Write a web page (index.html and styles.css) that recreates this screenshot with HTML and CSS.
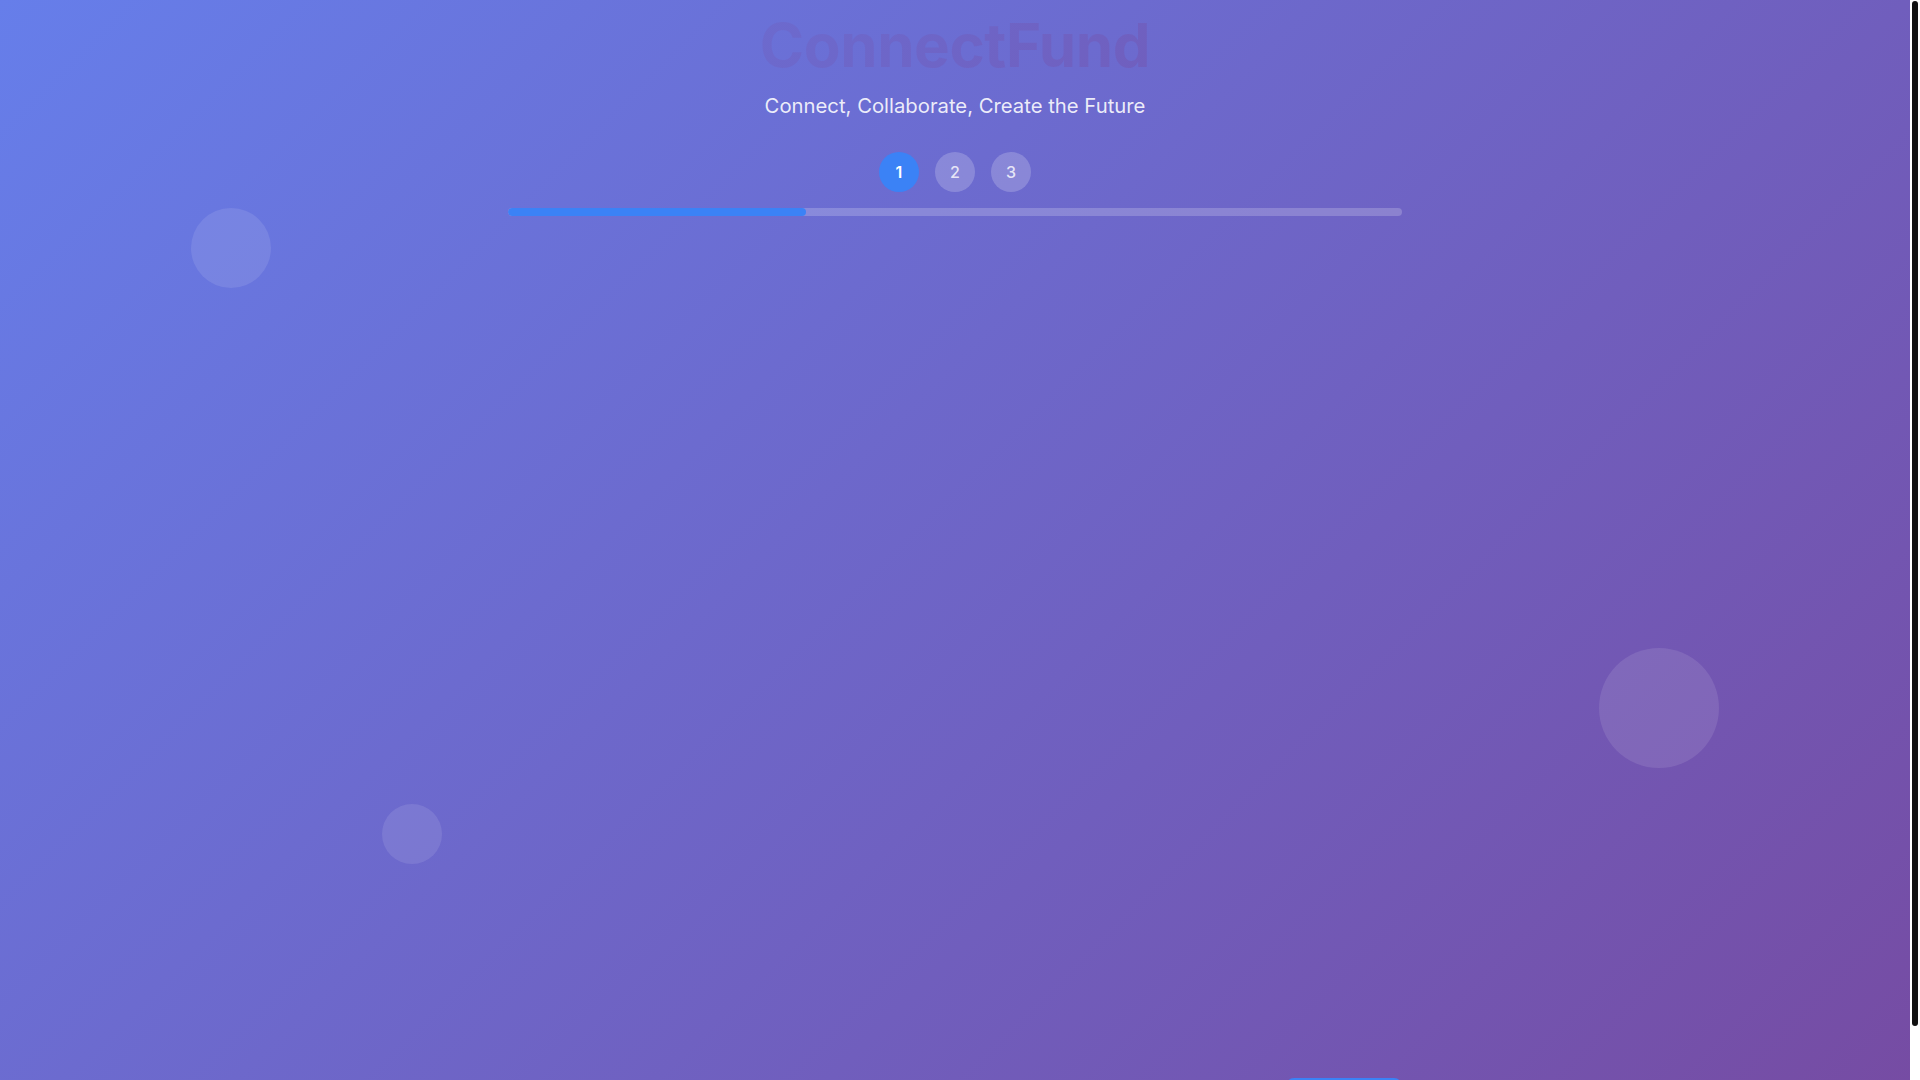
FILE: index.html
```html
<!DOCTYPE html>
<html lang="en">
<head>
<meta charset="UTF-8">
<title>ConnectFund</title>
<link rel="stylesheet" href="styles.css">
</head>
<body>
<div class="page">
  <div class="shapes">
    <div class="shape shape-a"></div>
    <div class="shape shape-b"></div>
    <div class="shape shape-c"></div>
  </div>
  <header class="header">
    <h1 class="logo">ConnectFund</h1>
    <p class="tagline">Connect, Collaborate, Create the Future</p>
  </header>
  <div class="container">
    <div class="steps">
      <div class="step active">1</div>
      <div class="step">2</div>
      <div class="step">3</div>
    </div>
    <div class="progress"><div class="progress-fill" style="width:33.333%"></div></div>
    <main class="step-content"></main>
    <div class="actions">
      <button class="btn-next">Next →</button>
    </div>
  </div>
</div>
<div class="scrollbar"><div class="scrollbar-thumb"></div></div>
</body>
</html>
```
FILE: styles.css
```css
* { box-sizing: border-box; }
html { background: #764ba2; scrollbar-width: none; }
::-webkit-scrollbar { display: none; width: 0; }

body {
  margin: 0;
  font-family: Inter, "Noto Sans", sans-serif;
  color: #ffffff;
}

.page {
  position: relative;
  width: calc(100% - 10px);
  min-height: 100vh;
  padding: 9px 0 11px;
  background: linear-gradient(135deg, #667eea 0%, #764ba2 100%);
}

.shapes { position: absolute; inset: 0; pointer-events: none; }
.shape { position: absolute; border-radius: 50%; background: rgba(255, 255, 255, 0.1); }
.shape-a { width: 80px; height: 80px; top: 208px; left: 10%; }
.shape-b { width: 120px; height: 120px; top: 648px; right: 10%; }
.shape-c { width: 60px; height: 60px; top: 804px; left: 20%; }

.header { position: relative; text-align: center; }

.logo {
  margin: 0;
  font-size: 60px;
  font-weight: 700;
  line-height: 72px;
  letter-spacing: -0.4px;
  background: linear-gradient(135deg, #667eea 0%, #764ba2 100%);
  -webkit-background-clip: text;
  background-clip: text;
  color: transparent;
}

.tagline {
  margin: 10px 0 0;
  font-size: 20.3px;
  line-height: 30px;
  color: rgba(255, 255, 255, 0.88);
}

.container {
  position: relative;
  max-width: 894px;
  margin: 0 auto;
  display: flex;
  flex-direction: column;
}

.steps {
  margin-top: 31px;
  display: flex;
  justify-content: center;
  gap: 16px;
}

.step {
  width: 40px;
  height: 40px;
  border-radius: 50%;
  display: flex;
  align-items: center;
  justify-content: center;
  font-size: 16px;
  font-weight: 500;
  background: rgba(255, 255, 255, 0.2);
  color: rgba(255, 255, 255, 0.8);
}
.step.active { background: #3b82f6; color: #ffffff; font-weight: 600; }

.progress {
  margin-top: 16px;
  height: 8px;
  border-radius: 4px;
  background: rgba(255, 255, 255, 0.2);
  overflow: hidden;
}
.progress-fill { height: 100%; background: #3b82f6; border-radius: 4px; }

.step-content { height: 862px; }

.actions { display: flex; justify-content: flex-end; }

.btn-next {
  height: 48px;
  padding: 0 30px;
  border: none;
  border-radius: 8px;
  background: #3b82f6;
  color: #ffffff;
  font-family: Inter, sans-serif;
  font-size: 16px;
  font-weight: 600;
}

.scrollbar {
  position: fixed;
  top: 0;
  right: 0;
  width: 10px;
  height: 100vh;
  background: #ffffff;
}
.scrollbar-thumb {
  margin: 1px 0 0 2px;
  width: 6px;
  height: 1025px;
  border-radius: 3px;
  background: #111111;
}
```
